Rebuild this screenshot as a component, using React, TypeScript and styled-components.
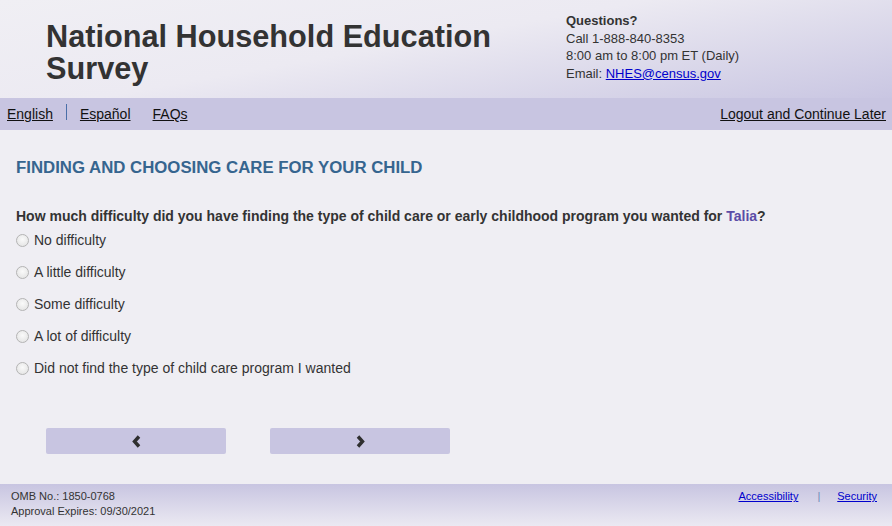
import React, { ReactElement } from 'react';
import styled, { createGlobalStyle } from 'styled-components';

const GlobalStyle = createGlobalStyle`
  html, body {
    margin: 0;
    padding: 0;
    background: #efeef3;
  }
  body {
    font-family: 'Liberation Sans', Arial, sans-serif;
    color: #333;
  }
`;

const Page = styled.div`
  width: 892px;
  height: 526px;
  display: flex;
  flex-direction: column;
  background: #efeef3;
  overflow: hidden;
`;

const Header = styled.header`
  height: 98px;
  display: flex;
  justify-content: space-between;
  background: linear-gradient(170deg, #f0eff4 0%, #eceaf2 45%, #c9c6e2 100%);
`;

const Title = styled.h1`
  margin: 0;
  padding: 21px 0 0 46px;
  font-size: 30.7px;
  line-height: 32px;
  font-weight: bold;
  color: #333;
  width: 470px;
`;

const Contact = styled.div`
  padding: 12px 0 0 0;
  width: 326px;
  font-size: 13px;
  line-height: 17.5px;
  color: #333;

  strong {
    display: block;
  }
  a {
    color: #00c;
  }
`;

const NavBar = styled.nav`
  height: 32px;
  display: flex;
  align-items: center;
  padding: 0 6px 0 7px;
  background: #c8c5e1;
  font-size: 14px;
`;

const NavLink = styled.a<{ $gap?: number }>`
  color: #111;
  text-decoration: underline;
  margin-right: ${(p) => p.$gap ?? 0}px;
`;

const Divider = styled.span`
  width: 1px;
  height: 16px;
  background: #4a6fa8;
  margin: -4px 13px 0 13px;
`;

const Spacer = styled.div`
  flex: 1;
`;

const Main = styled.main`
  flex: 1;
  padding: 28px 16px 0 16px;
`;

const SectionTitle = styled.h2`
  margin: 0 0 29px 0;
  font-size: 16.8px;
  line-height: 20px;
  font-weight: bold;
  color: #36658f;
`;

const Question = styled.p`
  margin: 0 0 6px 0;
  font-size: 14px;
  line-height: 18px;
  font-weight: bold;
  color: #333;

  span {
    color: #5b4ca6;
  }
`;

const Options = styled.div`
  display: flex;
  flex-direction: column;
`;

const Option = styled.label`
  height: 32px;
  display: flex;
  align-items: center;
  font-size: 14px;
  color: #333;
  margin-top: -7px;
  margin-bottom: 7px;
`;

const Radio = styled.span`
  width: 11px;
  height: 11px;
  border-radius: 50%;
  border: 1px solid #b4b4b4;
  background: radial-gradient(circle at 50% 40%, #fafafa 0%, #e0e0e0 100%);
  margin-right: 5px;
  flex-shrink: 0;
`;

const ButtonRow = styled.div`
  display: flex;
  gap: 44px;
  padding: 37px 0 0 30px;
`;

const NavButton = styled.button`
  width: 180px;
  height: 26px;
  border: none;
  border-radius: 2px;
  background: #c8c5e1;
  display: flex;
  align-items: center;
  justify-content: center;
  padding: 0;
  cursor: pointer;
`;

const Footer = styled.footer`
  height: 42px;
  display: flex;
  justify-content: space-between;
  padding: 5px 15px 0 11px;
  box-sizing: border-box;
  background: linear-gradient(180deg, #c8c5e1 0%, #ebe9f2 100%);
  font-size: 11px;
  line-height: 15px;
  color: #333;
`;

const FooterLinks = styled.div`
  display: flex;
  align-items: flex-start;

  a {
    color: #00c;
  }
`;

const FooterSep = styled.span`
  color: #6a8ab8;
  margin: 0 17px 0 19px;
`;

function Chevron({ dir }: { dir: 'left' | 'right' }): ReactElement {
  const d = dir === 'left' ? 'M8 1.5 L3.5 6.5 L8 11.5' : 'M3 1.5 L7.5 6.5 L3 11.5';
  return (
    <svg width="11" height="13" viewBox="0 0 11 13">
      <path d={d} fill="none" stroke="#2f2f2f" strokeWidth="3.4" strokeLinejoin="miter" />
    </svg>
  );
}

const options = [
  'No difficulty',
  'A little difficulty',
  'Some difficulty',
  'A lot of difficulty',
  'Did not find the type of child care program I wanted',
];

export default function App(): ReactElement {
  return (
    <Page>
      <GlobalStyle />
      <Header>
        <Title>National Household Education Survey</Title>
        <Contact>
          <strong>Questions?</strong>
          <div>Call 1-888-840-8353</div>
          <div>8:00 am to 8:00 pm ET (Daily)</div>
          <div>
            Email: <a href="#">NHES@census.gov</a>
          </div>
        </Contact>
      </Header>
      <NavBar>
        <NavLink href="#">English</NavLink>
        <Divider />
        <NavLink href="#" $gap={22}>Español</NavLink>
        <NavLink href="#">FAQs</NavLink>
        <Spacer />
        <NavLink href="#">Logout and Continue Later</NavLink>
      </NavBar>
      <Main>
        <SectionTitle>FINDING AND CHOOSING CARE FOR YOUR CHILD</SectionTitle>
        <Question>
          How much difficulty did you have finding the type of child care or early childhood program you
          wanted for <span>Talia</span>?
        </Question>
        <Options>
          {options.map((o) => (
            <Option key={o}>
              <Radio />
              {o}
            </Option>
          ))}
        </Options>
        <ButtonRow>
          <NavButton aria-label="Previous">
            <Chevron dir="left" />
          </NavButton>
          <NavButton aria-label="Next">
            <Chevron dir="right" />
          </NavButton>
        </ButtonRow>
      </Main>
      <Footer>
        <div>
          <div>OMB No.: 1850-0768</div>
          <div>Approval Expires: 09/30/2021</div>
        </div>
        <FooterLinks>
          <a href="#">Accessibility</a>
          <FooterSep>|</FooterSep>
          <a href="#">Security</a>
        </FooterLinks>
      </Footer>
    </Page>
  );
}
